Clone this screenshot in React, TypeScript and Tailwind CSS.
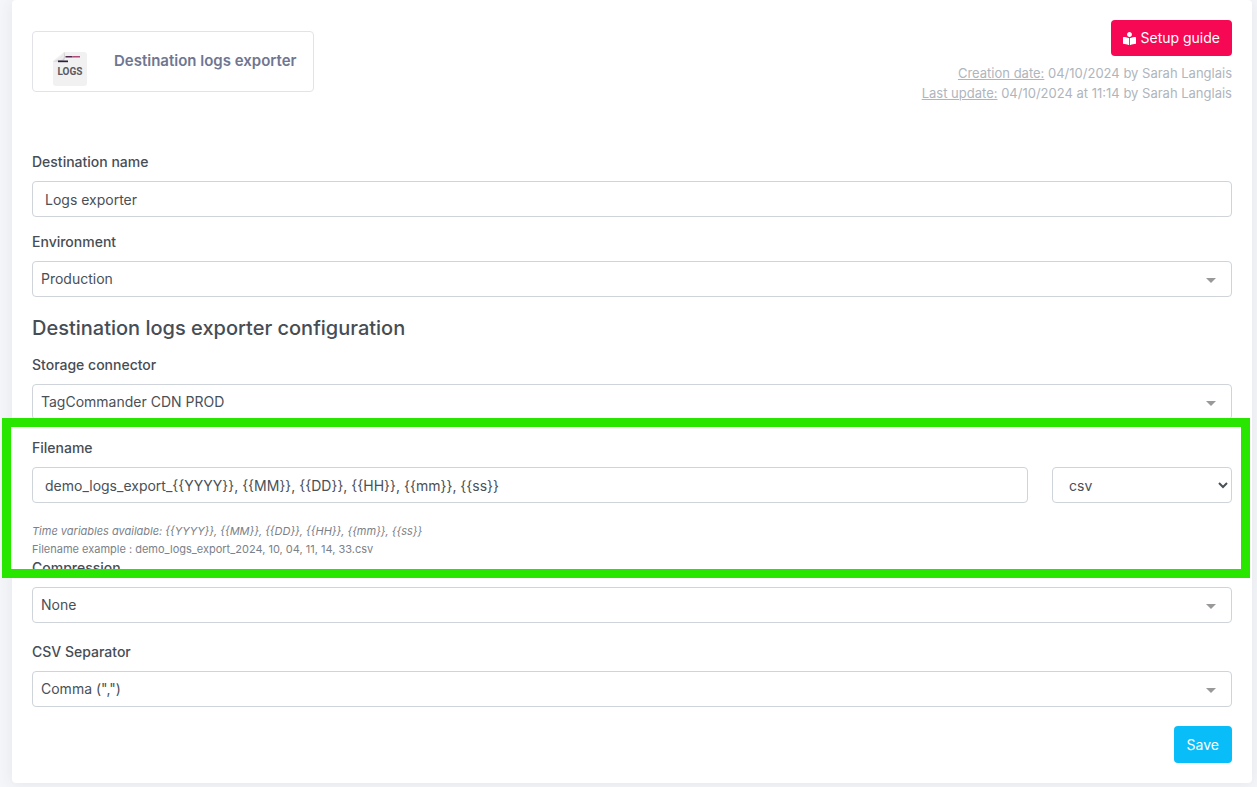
import { useState } from "react";
import type { ReactNode } from "react";
import { FaBookReader } from "react-icons/fa";

const TIME_VARIABLES = "{{YYYY}}, {{MM}}, {{DD}}, {{HH}}, {{mm}}, {{ss}}";

const fieldClass =
  "block h-9 w-full rounded border border-[#ced4da] bg-white text-sm text-[#495057] outline-none focus:border-[#80bdff]";

function Label({ htmlFor, children }: { htmlFor: string; children: ReactNode }) {
  return (
    <label htmlFor={htmlFor} className="mb-[9px] block text-sm leading-5 font-medium text-[#464d55]">
      {children}
    </label>
  );
}

interface SelectFieldProps {
  id: string;
  label: string;
  options: string[];
}

function SelectField({ id, label, options }: SelectFieldProps) {
  const [value, setValue] = useState(options[0]);

  return (
    <div>
      <Label htmlFor={id}>{label}</Label>
      <div className="relative">
        <select
          id={id}
          value={value}
          onChange={(e) => setValue(e.target.value)}
          className={`${fieldClass} appearance-none pr-10 pl-2`}
        >
          {options.map((option) => (
            <option key={option}>{option}</option>
          ))}
        </select>
        <svg
          viewBox="0 0 10 5"
          className="pointer-events-none absolute top-[17px] right-4 h-[5px] w-[10px] fill-[#999999]"
          aria-hidden="true"
        >
          <path d="M0 0h10L5 5z" />
        </svg>
      </div>
    </div>
  );
}

function LogsIcon() {
  return (
    <svg viewBox="0 0 34 34" className="mt-[14px] h-[34px] w-[34px] shrink-0" aria-hidden="true">
      <path d="M11 0h20a3 3 0 0 1 3 3v28a3 3 0 0 1-3 3H3a3 3 0 0 1-3-3V9z" fill="#f1f1f1" />
      <path d="M0 9.500C5 8 9 5 11.500 0L12 5c0 3-1.500 4.500-4.500 4.500z" fill="#cfcfcf" />
      <path d="M1 8.500C5 7.500 9 5 11 .500L11 4c0 2.500-1 4-3.500 4z" fill="#ececec" />
      <rect x="12.500" y="4" width="7" height="1.500" fill="#54284f" />
      <rect x="19.500" y="4" width="7.500" height="1.500" fill="#b04a78" />
      <rect x="5" y="8.500" width="10" height="1.700" fill="#2e1f40" />
      <text
        x="17"
        y="23"
        textAnchor="middle"
        fontFamily="Roboto, sans-serif"
        fontSize="10"
        fontWeight="700"
        fill="#5c5962"
      >
        LOGS
      </text>
    </svg>
  );
}

export default function App() {
  const [name, setName] = useState("Logs exporter");
  const [filename, setFilename] = useState(`demo_logs_export_${TIME_VARIABLES}`);
  const [extension, setExtension] = useState("csv");

  return (
    <div className="min-h-screen bg-[#f5f6f9] pr-[5px] pb-1 pl-3 font-[Inter,sans-serif]">
      <main className="rounded bg-white p-5 shadow-[0_1px_15px_1px_rgba(69,65,78,0.08)]">
        <header className="flex items-start justify-between">
          <div className="mt-[11px] flex h-[61px] items-center rounded border border-[#e2e3e8] pr-4 pl-5">
            <LogsIcon />
            <h1 className="ml-[27px] text-[15px] font-semibold text-[#6f7690]">Destination logs exporter</h1>
          </div>
          <div className="flex flex-col items-end text-[13px] leading-5 text-[#afb5bd]">
            <button
              type="button"
              className="mb-[7px] flex h-9 items-center gap-1 rounded bg-[#f60854] px-3 text-sm text-white"
            >
              <FaBookReader className="h-[13px] w-[13px]" />
              Setup guide
            </button>
            <p>
              <span className="underline">Creation date:</span> 04/10/2024 by Sarah Langlais
            </p>
            <p>
              <span className="underline">Last update:</span> 04/10/2024 at 11:14 by Sarah Langlais
            </p>
          </div>
        </header>

        <form className="mt-[49px]" onSubmit={(e) => e.preventDefault()}>
          <div className="space-y-[15px]">
            <div>
              <Label htmlFor="name">Destination name</Label>
              <input
                id="name"
                type="text"
                value={name}
                onChange={(e) => setName(e.target.value)}
                className={`${fieldClass} px-3`}
              />
            </div>
            <SelectField id="environment" label="Environment" options={["Production", "Staging"]} />
          </div>

          <h2 className="mt-4 mb-3 text-xl leading-[30px] font-medium text-[#464d55]">
            Destination logs exporter configuration
          </h2>

          <SelectField id="storage" label="Storage connector" options={["TagCommander CDN PROD"]} />

          <section className="relative mt-[18px]">
            <div className="pointer-events-none absolute -top-5 -right-[18px] -bottom-5 -left-[30px] z-10 border-9 border-[#28e600]" />
            <Label htmlFor="filename">Filename</Label>
            <div className="flex gap-6">
              <div className="flex-1">
                <input
                  id="filename"
                  type="text"
                  value={filename}
                  onChange={(e) => setFilename(e.target.value)}
                  className={`${fieldClass} px-3`}
                />
              </div>
              <div className="w-[15%]">
                <select
                  aria-label="File extension"
                  value={extension}
                  onChange={(e) => setExtension(e.target.value)}
                  className={`${fieldClass} pl-3`}
                >
                  <option>csv</option>
                  <option>json</option>
                </select>
              </div>
            </div>
            <div className="mt-[19px] text-[11px] leading-[18px] text-[#7b8189]">
              <p className="italic">Time variables available: {TIME_VARIABLES}</p>
              <p>Filename example : demo_logs_export_2024, 10, 04, 11, 14, 33.csv</p>
            </div>
          </section>

          <div className="space-y-[19px]">
            <SelectField id="compression" label="Compression" options={["None", "Gzip", "Zip"]} />
            <SelectField id="separator" label="CSV Separator" options={['Comma (",")', 'Semicolon (";")']} />
          </div>

          <div className="mt-[19px] flex justify-end">
            <button type="submit" className="h-[37px] rounded bg-[#08bdf8] px-[13px] text-sm text-white">
              Save
            </button>
          </div>
        </form>
      </main>
    </div>
  );
}
